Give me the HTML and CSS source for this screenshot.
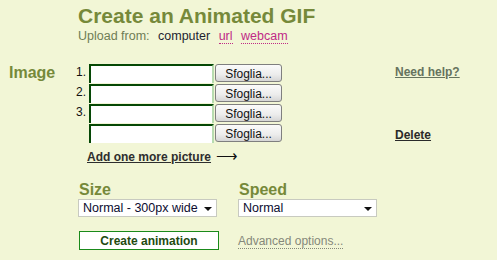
FILE: index.html
```html
<!DOCTYPE html>
<html lang="en">
<head>
    <meta charset="UTF-8">
    <title>Create an Animated GIF</title>
    <link rel="stylesheet" href="styles.css">
</head>
<body>
    <div class="page">
        <div class="header">
            <h1>Create an Animated GIF</h1>
            <p class="upload-from">
                Upload from:
                <span class="source current">computer</span>
                <a href="#" class="source">url</a>
                <a href="#" class="source">webcam</a>
            </p>
        </div>

        <div class="image-section">
            <div class="section-label">Image</div>
            <div class="files">
                <div class="file-row">
                    <span class="num">1.</span>
                    <input type="text" class="file-input">
                    <button class="browse-btn">Sfoglia...</button>
                    <a href="#" class="help-link">Need help?</a>
                </div>
                <div class="file-row">
                    <span class="num">2.</span>
                    <input type="text" class="file-input">
                    <button class="browse-btn">Sfoglia...</button>
                    <span></span>
                </div>
                <div class="file-row">
                    <span class="num">3.</span>
                    <input type="text" class="file-input">
                    <button class="browse-btn">Sfoglia...</button>
                    <span></span>
                </div>
                <div class="file-row">
                    <span class="num"></span>
                    <input type="text" class="file-input">
                    <button class="browse-btn">Sfoglia...</button>
                    <a href="#" class="delete-link">Delete</a>
                </div>
                <a href="#" class="add-more">Add one more picture</a><span class="arrow">⟶</span>
            </div>
        </div>

        <div class="options">
            <div class="option">
                <div class="option-label">Size</div>
                <div class="select-box">
                    <select>
                        <option>Normal - 300px wide</option>
                    </select>
                </div>
            </div>
            <div class="option">
                <div class="option-label">Speed</div>
                <div class="select-box">
                    <select>
                        <option>Normal</option>
                    </select>
                </div>
            </div>
        </div>

        <div class="actions">
            <button class="create-btn">Create animation</button>
            <a href="#" class="advanced">Advanced options...</a>
        </div>
    </div>
</body>
</html>
```

FILE: styles.css
```css
body {
    margin: 0;
    background: #f2f6d6;
    font-family: 'Liberation Sans', Arial, sans-serif;
    font-size: 12px;
    color: #222;
}

.page {
    padding-top: 5px;
}

.header {
    padding-left: 78px;
}

h1 {
    margin: 0;
    font-size: 21px;
    line-height: 22px;
    color: #76893a;
}

.upload-from {
    margin: 2px 0 0;
    font-size: 12.5px;
    line-height: 15px;
    color: #6f7d55;
}

.source {
    margin-left: 5px;
    color: #c02a86;
    text-decoration: none;
    border-bottom: 1px dotted #c02a86;
}

.source.current {
    color: #1e1e30;
    border-bottom: none;
}

.image-section {
    display: flex;
    margin-top: 20px;
}

.section-label {
    width: 67px;
    margin-top: -1px;
    padding-left: 9px;
    font-size: 16px;
    font-weight: bold;
    line-height: 19px;
    color: #76893a;
}

.files {
    flex: 1;
}

.file-row {
    display: grid;
    grid-template-columns: 12px 125px 67px 1fr;
    column-gap: 1px;
    align-items: start;
    margin-bottom: 1px;
}

.num {
    padding-right: 4px;
    text-align: right;
    line-height: 16px;
    color: #111;
}

.file-input {
    box-sizing: border-box;
    width: 125px;
    height: 19px;
    margin: 0;
    padding: 0 2px;
    background: #fff;
    border-top: 2px solid #064806;
    border-left: 2px solid #064806;
    border-right: 2px solid #b8dcb0;
    border-bottom: 0;
    outline: none;
}

.browse-btn {
    box-sizing: border-box;
    width: 67px;
    height: 18px;
    margin: 0;
    padding: 3px 0 0;
    font-family: inherit;
    font-size: 12px;
    line-height: 13px;
    color: #111;
    background: linear-gradient(#fbfbfb, #ececec 60%, #d6d6d6);
    border: 1px solid #7f7f7f;
    border-radius: 3px;
}

.help-link,
.delete-link {
    margin-left: 112px;
    font-weight: bold;
    line-height: 16px;
}

.help-link {
    color: #66735e;
}

.delete-link {
    margin-top: 3px;
    color: #2a2a2a;
}

.add-more {
    display: inline-block;
    margin: 6px 0 0 11px;
    font-weight: bold;
    line-height: 14px;
    color: #2e2e2e;
}

.arrow {
    margin-left: 5px;
    font-size: 15px;
    color: #111;
}

.options {
    display: flex;
    gap: 21px;
    margin: 16px 0 0 78px;
}

.option-label {
    font-size: 16px;
    font-weight: bold;
    line-height: 18px;
    color: #76893a;
    padding-left: 1px;
}

.select-box {
    position: relative;
    width: 139px;
    height: 18px;
    margin-top: 0;
}

.select-box select {
    appearance: none;
    box-sizing: border-box;
    width: 100%;
    height: 100%;
    margin: 0;
    padding: 0 0 0 4px;
    font-family: inherit;
    font-size: 12.5px;
    color: #0c0c30;
    background: #fff;
    border: 1px solid #c8cac0;
    border-radius: 0;
}

.select-box::after {
    content: "";
    position: absolute;
    right: 5px;
    top: 8px;
    border-left: 4px solid transparent;
    border-right: 4px solid transparent;
    border-top: 4px solid #111;
}

.actions {
    display: flex;
    align-items: flex-end;
    gap: 19px;
    margin: 14px 0 0 79px;
}

.create-btn {
    box-sizing: border-box;
    width: 140px;
    height: 19px;
    margin: 0;
    padding: 0;
    font-family: inherit;
    font-size: 12px;
    font-weight: bold;
    color: #234a10;
    background: #fff;
    border: 1px solid #1a8a1a;
}

.advanced {
    margin-bottom: 1px;
    color: #85887a;
    text-decoration: none;
    border-bottom: 1px dotted #85887a;
    line-height: 13px;
}
```
